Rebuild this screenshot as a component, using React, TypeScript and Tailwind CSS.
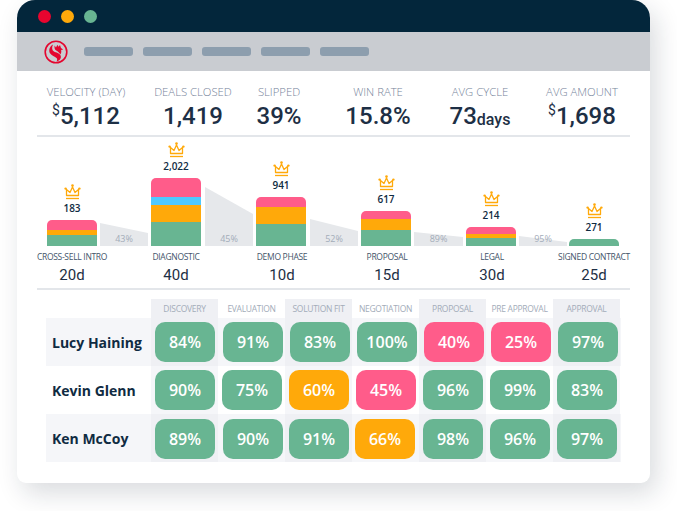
import React from 'react';

const stats = [
  { label: 'VELOCITY (DAY)', value: '5,112', prefix: '$', ml: 'ml-[9px]' },
  { label: 'DEALS CLOSED', value: '1,419', ml: 'ml-[27px]' },
  { label: 'SLIPPED', value: '39%', ml: 'ml-[6px]' },
  { label: 'WIN RATE', value: '15.8%', ml: 'ml-[19px]' },
  { label: 'AVG CYCLE', value: '73', suffix: 'days', ml: 'ml-[22px]' },
  { label: 'AVG AMOUNT', value: '1,698', prefix: '$', ml: 'ml-[22px]' },
];

const stages = [
  { name: 'CROSS-SELL INTRO', count: '183', days: '20d', parts: [10, 5, 0, 11], mr: 'mr-[54px]' },
  { name: 'DIAGNOSTIC', count: '2,022', days: '40d', parts: [19, 17, 8, 24], mr: 'mr-[56px]' },
  { name: 'DEMO PHASE', count: '941', days: '10d', parts: [10, 17, 0, 22], mr: 'mr-[55px]' },
  { name: 'PROPOSAL', count: '617', days: '15d', parts: [8, 11, 0, 16], mr: 'mr-[55px]' },
  { name: 'LEGAL', count: '214', days: '30d', parts: [7, 4, 0, 8], mr: 'mr-[52px]' },
  { name: 'SIGNED CONTRACT', count: '271', days: '25d', parts: [0, 0, 0, 7], mr: '' },
];

// left and right heights of the grey drop-off shapes between the bars
const funnels = [
  { pct: '43%', left: 23, right: 13, box: 'ml-[3px] mr-[3px] w-[48px]', width: 48 },
  { pct: '45%', left: 59, right: 32, box: 'ml-[4px] mr-[3px] w-[48px]', width: 48 },
  { pct: '52%', left: 27, right: 15, box: 'ml-[4px] mr-[3px] w-[48px]', width: 48 },
  { pct: '89%', left: 14, right: 9, box: 'ml-[3px] mr-[3px] w-[49px]', width: 49 },
  { pct: '95%', left: 10, right: 4, box: 'ml-[3px] mr-[2px] w-[48px]', width: 48 },
];

const columns = ['DISCOVERY', 'EVALUATION', 'SOLUTION FIT', 'NEGOTIATION', 'PROPOSAL', 'PRE APPROVAL', 'APPROVAL'];

const rows = [
  { name: 'Lucy Haining', bg: 'bg-[#f5f6f9]', pt: 'pt-[4px]', pad: ['pl-[4px]', 'pl-[5px]', 'pl-[5px]', 'pl-[5px]', 'pl-[5px]', 'pl-[5px]', 'pl-[5px]'], scores: [84, 91, 83, 100, 40, 25, 97] },
  { name: 'Kevin Glenn', bg: 'bg-white', pt: 'pt-[4px]', pad: ['pl-[4px]', 'pl-[4px]', 'pl-[4px]', 'pl-[4px]', 'pl-[4px]', 'pl-[4px]', 'pl-[4px]'], scores: [90, 75, 60, 45, 96, 99, 83] },
  { name: 'Ken McCoy', bg: 'bg-[#f5f6f9]', pt: 'pt-[5px]', pad: ['pl-[4px]', 'pl-[5px]', 'pl-[4px]', 'pl-[3px]', 'pl-[4px]', 'pl-[4px]', 'pl-[4px]'], scores: [89, 90, 91, 66, 98, 96, 97] },
];

const scoreColor = (score: number) => {
  if (score >= 70) return 'bg-[#68b592]';
  if (score >= 50) return 'bg-[#ffa90a]';
  return 'bg-[#ff5c8a]';
};

const Crown = () => (
  <svg width="17" height="16" viewBox="0 0 17 16" fill="none" stroke="#ffa90a" strokeWidth="1.3">
    <path d="M2.5 5.5V11.5H14.5V5.5L11 8.5L8.5 3L6 8.5Z" strokeLinejoin="round" />
    <path d="M2 14.5H15" />
    <circle cx="1.6" cy="4.6" r="1.2" fill="#ffa90a" stroke="none" />
    <circle cx="8.5" cy="1.6" r="1.3" fill="#ffa90a" stroke="none" />
    <circle cx="15.4" cy="4.6" r="1.2" fill="#ffa90a" stroke="none" />
  </svg>
);

const Logo = () => (
  <svg width="24" height="24" viewBox="0 0 24 24" fill="none">
    <circle cx="12" cy="12" r="10.8" stroke="#e4062f" strokeWidth="1.6" />
    <path
      d="M9 4.5C5.5 6.5 4.4 10.5 6 13.2C7.5 15.8 11 16.4 12.5 18C13.5 19 13.3 20.5 12.4 21.6C16 20.6 17.6 18 16.6 15.5C15.6 13 12 12.6 10 11.5C8 10.4 7.5 7.8 9 4.5Z"
      fill="#e4062f"
    />
    <path
      d="M10.6 5.4L12 7.4L13.4 4.8L14.5 6.8L16 5L17 8L19.2 9.6L17.1 10C17.6 11.8 17.2 13.2 16.3 14.4C15.4 12.8 14 11.4 12.2 10.5C10.7 9.6 10.2 7.5 10.6 5.4Z"
      fill="#e4062f"
    />
  </svg>
);

const Funnel = ({ pct, left, right, box, width }: { pct: string; left: number; right: number; box: string; width: number }) => (
  <div className={`relative h-[60px] ${box}`}>
    <svg width={width} height="60" viewBox={`0 0 ${width} 60`} className="block">
      <polygon points={`0,${60 - left} ${width},${60 - right} ${width},60 0,60`} fill="#e6e8eb" />
    </svg>
    <span className="absolute bottom-[1px] left-0 w-full text-center text-[9px] leading-[12px] text-[#a3acb9]">{pct}</span>
  </div>
);

export default function App() {
  return (
    <div className="h-[511px] w-[677px] overflow-hidden bg-white font-['Open_Sans',sans-serif]">
      <div className="ml-[17px] h-[483px] w-[633px] rounded-t-[18px] rounded-b-[9px] bg-white shadow-[6px_10px_26px_rgba(20,30,50,0.16)]">
        {/* title bar */}
        <div className="flex h-[32px] items-center gap-[10px] rounded-t-[18px] bg-[#03263b] pl-[20.5px]">
          <span className="h-[13px] w-[13px] rounded-full bg-[#e8052f]" />
          <span className="h-[13px] w-[13px] rounded-full bg-[#ffa90a]" />
          <span className="h-[13px] w-[13px] rounded-full bg-[#68b592]" />
        </div>

        {/* toolbar */}
        <div className="flex h-[39px] items-center bg-[#c9ccd1] pl-[27px]">
          <Logo />
          <div className="ml-[16px] flex gap-[10px]">
            {[0, 1, 2, 3, 4].map((i) => (
              <span key={i} className="h-[9px] w-[49px] rounded-[3px] bg-[#8d9eae]" />
            ))}
          </div>
        </div>

        {/* stats */}
        <div className="mx-[20px] flex h-[66px] border-b-2 border-[#e3e6ea] pt-[13px]">
          {stats.map((s) => (
            <div key={s.label} className={`w-[80px] whitespace-nowrap text-center ${s.ml}`}>
              <div className="flex justify-center text-[11.3px] font-light leading-[16px] text-[#75839a]">{s.label}</div>
              <div className="mt-[1px] flex items-start justify-center font-['Roboto',sans-serif] text-[24px] font-medium leading-[30px] text-[#1d2f45]">
                {s.prefix && <span className="mt-[1px] text-[14px] font-normal leading-[16px]">{s.prefix}</span>}
                <span>{s.value}</span>
                {s.suffix && <span className="mt-[7px] text-[16px] leading-[24px]">{s.suffix}</span>}
              </div>
            </div>
          ))}
        </div>

        {/* funnel chart */}
        <div className="mx-[20px] h-[153px] border-b-2 border-[#e3e6ea]">
          <div className="flex h-[109px] items-end pl-[10px]">
            {stages.map((stage, i) => (
              <React.Fragment key={stage.name}>
                <div className="flex w-[50px] flex-col items-center">
                  <Crown />
                  <div className="mb-[5px] mt-[1px] text-[10px] font-semibold leading-[14px] text-[#0f2b42]">{stage.count}</div>
                  <div className="flex w-full flex-col overflow-hidden rounded-t-[5px]">
                    {stage.parts[0] > 0 && <div className="bg-[#ff5c8a]" style={{ height: stage.parts[0] }} />}
                    {stage.parts[2] > 0 && <div className="bg-[#4fc9ff]" style={{ height: stage.parts[2] }} />}
                    {stage.parts[1] > 0 && <div className="bg-[#ffa90a]" style={{ height: stage.parts[1] }} />}
                    <div className="bg-[#68b592]" style={{ height: stage.parts[3] }} />
                  </div>
                </div>
                {funnels[i] && <Funnel {...funnels[i]} />}
              </React.Fragment>
            ))}
          </div>
          <div className="flex pl-[10px]">
            {stages.map((stage) => (
              <div key={stage.name} className={`flex w-[50px] shrink-0 flex-col items-center whitespace-nowrap ${stage.mr}`}>
                <div className="mt-[5px] text-[8.5px] leading-[12px] tracking-[-0.3px] text-[#44546a]">{stage.name}</div>
                <div className="font-['Roboto',sans-serif] text-[15px] leading-[24px] text-[#1d2f45]">{stage.days}</div>
              </div>
            ))}
          </div>
        </div>

        {/* scores table */}
        <div className="ml-[29px] mt-[9px] w-[575px]">
          <div className="flex h-[19px]">
            <div className="w-[105px]" />
            {columns.map((col, i) => (
              <div
                key={col}
                className={`flex w-[67px] items-center justify-center whitespace-nowrap pt-[1px] text-[8.5px] tracking-[-0.3px] text-[#a3acb9] ${i % 2 === 0 ? 'bg-[#eff0f4]' : 'bg-white'}`}
              >
                {col}
              </div>
            ))}
          </div>
          {rows.map((row) => (
            <div key={row.name} className={`flex h-[48px] ${row.bg}`}>
              <div className="flex w-[105px] items-center pl-[6px] text-[14px] font-bold text-[#0f2b42]">{row.name}</div>
              {row.scores.map((score, i) => (
                <div key={i} className={`w-[67px] ${row.pt} ${row.pad[i]} ${i % 2 === 0 ? (row.bg === 'bg-white' ? 'bg-[#f5f6f9]' : 'bg-[#eff0f4]') : ''}`}>
                  <div className={`flex h-[40px] w-[60px] items-center justify-center rounded-[10px] text-[16px] font-semibold text-white ${scoreColor(score)}`}>
                    {score}%
                  </div>
                </div>
              ))}
            </div>
          ))}
        </div>
      </div>
    </div>
  );
}
